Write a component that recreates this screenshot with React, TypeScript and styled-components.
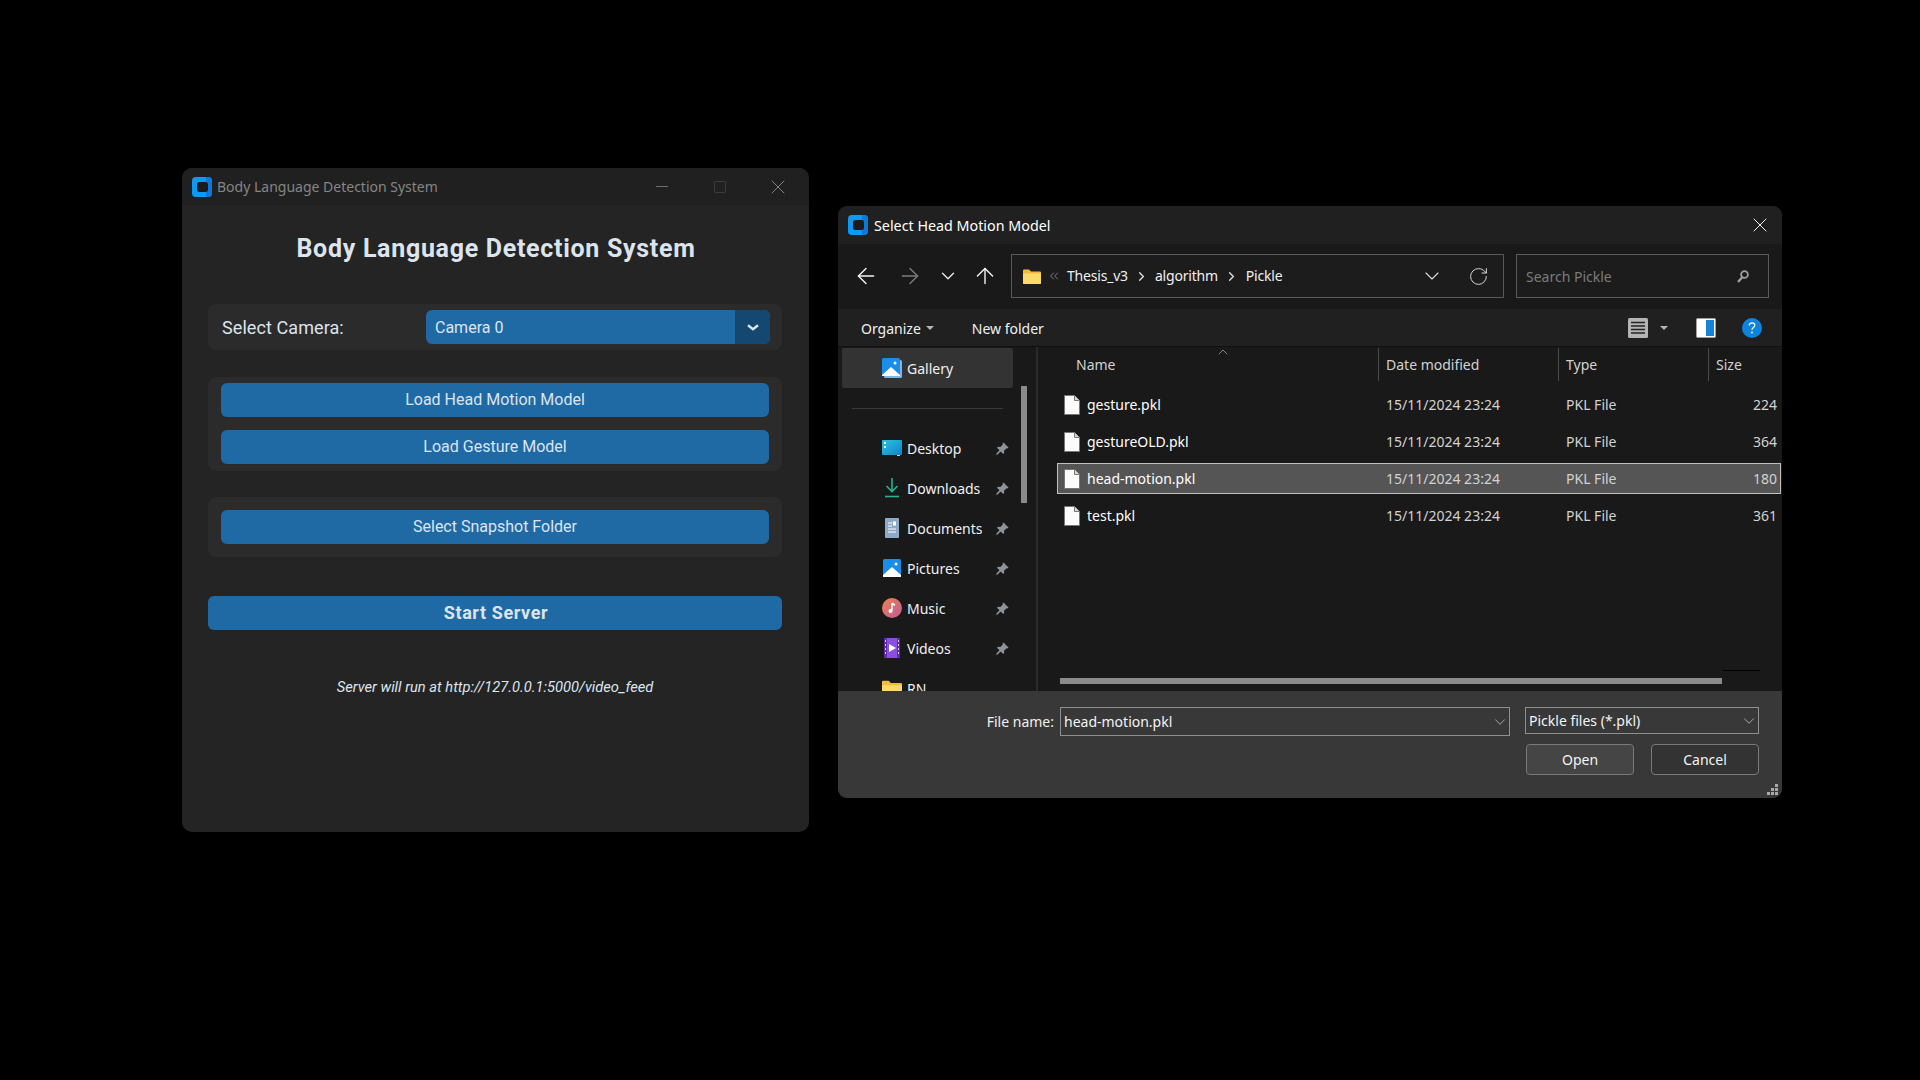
import React from 'react';
import styled, { createGlobalStyle } from 'styled-components';
import { ArrowLeft, ArrowRight, ArrowUp, ChevronDown, ChevronRight, ChevronUp, ChevronsLeft, RotateCw, X } from 'lucide-react';

const GlobalStyle = createGlobalStyle`
  html, body {
    margin: 0;
    height: 100%;
    background: #000;
  }
  #root {
    height: 100%;
  }
  * {
    box-sizing: border-box;
  }
`;

const Desktop = styled.div`
  position: relative;
  width: 1920px;
  height: 1080px;
  background: #000;
  overflow: hidden;
`;

/* ---------- CustomTkinter window ---------- */

const AppWindow = styled.section`
  position: absolute;
  left: 182px;
  top: 168px;
  width: 627px;
  height: 664px;
  display: flex;
  flex-direction: column;
  background: #242424;
  border-radius: 10px;
  overflow: hidden;
  font-family: Roboto, "Liberation Sans", sans-serif;
`;

const AppTitleBar = styled.header`
  flex: 0 0 37px;
  display: flex;
  align-items: center;
  padding: 0 2px 0 10px;
  background: #202020;
  color: #858585;
  font: 14px "Noto Sans", sans-serif;
`;

const AppTitleText = styled.span`
  margin-left: 5px;
  flex: 1;
`;

const WinControl = styled.div`
  width: 58px;
  height: 37px;
  display: flex;
  align-items: center;
  justify-content: center;
`;

const AppBody = styled.div`
  flex: 1;
  display: flex;
  flex-direction: column;
  padding: 29px 27px 0 26px;
`;

const Heading = styled.h1`
  margin: 0 0 40px;
  height: 30px;
  padding-left: 2px;
  line-height: 30px;
  text-align: center;
  font-size: 25px;
  font-weight: 700;
  letter-spacing: 0.7px;
  color: #dce4ee;
`;

const Panel = styled.div<{ $pad: string; $gap?: number; $after: number }>`
  display: flex;
  flex-direction: column;
  gap: ${p => p.$gap ?? 0}px;
  padding: ${p => p.$pad};
  margin-bottom: ${p => p.$after}px;
  background: #2b2b2b;
  border-radius: 8px;
`;

const CameraRow = styled.div`
  display: flex;
  align-items: center;
  justify-content: space-between;
`;

const FieldLabel = styled.label`
  font-size: 18px;
  letter-spacing: 0.08px;
  color: #dce4ee;
`;

const CameraSelect = styled.div`
  width: 344px;
  height: 34px;
  display: flex;
  border-radius: 6px;
  overflow: hidden;
  background: #1f6aa5;
  color: #dce4ee;
  font-size: 16px;
`;

const CameraValue = styled.span`
  flex: 1;
  line-height: 35px;
  padding-left: 9px;
`;

const CameraArrow = styled.span`
  width: 35px;
  display: flex;
  align-items: center;
  justify-content: center;
  background: #144870;
`;

const ActionButton = styled.button<{ $strong?: boolean }>`
  display: block;
  width: 100%;
  height: 34px;
  padding: ${p => (p.$strong ? '0 0 2px 2px' : '0 0 2px')};
  border: 0;
  border-radius: 6px;
  background: #1f6aa5;
  color: #dce4ee;
  font-family: inherit;
  font-size: ${p => (p.$strong ? 18 : 16)}px;
  font-weight: ${p => (p.$strong ? 700 : 400)};
  letter-spacing: ${p => (p.$strong ? 0.6 : 0)}px;
`;

const ServerNote = styled.p`
  margin: 47px 0 0;
  line-height: 20px;
  text-align: center;
  font-size: 14.7px;
  font-style: italic;
  color: #dce4ee;
`;

/* ---------- Windows file dialog ---------- */

const Dialog = styled.section`
  position: absolute;
  left: 838px;
  top: 206px;
  width: 944px;
  height: 592px;
  display: grid;
  grid-template-rows: 38px 65px 38px 344px 107px;
  background: #191919;
  border-radius: 9px;
  overflow: hidden;
  color: #fff;
  font: 14px "Noto Sans", sans-serif;
`;

const DialogTitleBar = styled.header`
  display: flex;
  align-items: center;
  padding: 0 10px 0 10px;
  background: #202020;
  font-size: 14.3px;
`;

const DialogTitle = styled.span`
  flex: 1;
  margin-left: 6px;
`;

const AddressRow = styled.div`
  display: flex;
  align-items: center;
  padding: 0 0 1px 6px;
  background: #191919;
`;

const NavButton = styled.div<{ $w: number }>`
  width: ${p => p.$w}px;
  display: flex;
  justify-content: center;
`;

const AddressBox = styled.div`
  width: 493px;
  height: 44px;
  margin-left: 5px;
  display: flex;
  align-items: center;
  padding-left: 11px;
  border: 1px solid #5a5a5a;
  background: #1c1c1c;
`;

const Crumb = styled.span`
  padding-bottom: 2px;
  letter-spacing: -0.2px;
  color: #f0f0f0;
`;

const CrumbGap = styled.span<{ $w: number }>`
  width: ${p => p.$w}px;
  display: flex;
  justify-content: center;
`;

const AddressEnd = styled.div`
  margin-left: auto;
  display: flex;
  align-items: center;
  gap: 24px;
  padding-right: 14px;
`;

const SearchBox = styled.div`
  width: 253px;
  height: 44px;
  margin-left: 12px;
  display: flex;
  align-items: center;
  justify-content: space-between;
  padding: 0 19px 0 9px;
  border: 1px solid #5a5a5a;
  background: #1c1c1c;
  color: #7b7b7b;
`;

const Toolbar = styled.div`
  display: flex;
  align-items: center;
  padding: 1px 20px 0 23px;
  background: #202020;
  border-bottom: 1px solid #111;
  color: #f0f0f0;
`;

const ToolCaret = styled.span<{ $left: number; $tone?: string }>`
  margin-left: ${p => p.$left}px;
  width: 0;
  height: 0;
  border-left: 4px solid transparent;
  border-right: 4px solid transparent;
  border-top: 4px solid ${p => p.$tone ?? '#b5b5b5'};
`;

const ToolLabel = styled.span<{ $left: number }>`
  margin-left: ${p => p.$left}px;
`;

const ToolIcon = styled.span<{ $left: number }>`
  margin-left: ${p => p.$left}px;
  display: flex;
`;

const ToolSpacer = styled.span`
  flex: 1;
`;

const Main = styled.div`
  display: grid;
  grid-template-columns: 198px 2px 1fr;
  min-height: 0;
  overflow: hidden;
  background: #191919;
`;

const Sidebar = styled.nav`
  position: relative;
  overflow: hidden;
  padding: 1px 0 0 4px;
`;

const SideThumb = styled.div`
  position: absolute;
  left: 183px;
  top: 39px;
  width: 6px;
  height: 117px;
  background: #8b8b8b;
`;

const GalleryItem = styled.div`
  width: 171px;
  height: 40px;
  display: flex;
  align-items: center;
  padding-left: 40px;
  gap: 5px;
  background: #333;
  border-radius: 2px;
  color: #f0f0f0;
`;

const SideRule = styled.div`
  width: 151px;
  height: 1px;
  margin: 20px 0 19px 10px;
  background: #3a3a3a;
`;

const SideItem = styled.div`
  width: 171px;
  height: 40px;
  display: flex;
  align-items: center;
  padding: 0 4px 0 40px;
  gap: 5px;
  color: #f0f0f0;
`;

const SideIconSlot = styled.span`
  width: 20px;
  display: flex;
  justify-content: center;
`;

const SideLabel = styled.span`
  flex: 1;
`;

const PaneRule = styled.div`
  background: #2b2b2b;
`;

const FileArea = styled.div`
  position: relative;
  display: flex;
  flex-direction: column;
  min-width: 0;
`;

const fileColumns = '321px 180px 150px 1fr';

const HeaderRow = styled.div`
  position: relative;
  display: grid;
  grid-template-columns: ${fileColumns};
  height: 33px;
  margin: 1px 0 8px 19px;
  color: #d2d2d2;
`;

const HeaderCell = styled.div<{ $first?: boolean }>`
  display: flex;
  align-items: center;
  padding-left: ${p => (p.$first ? 19 : 7)}px;
  border-left: ${p => (p.$first ? 'none' : '1px solid #4a4a4a')};
`;

const SortMark = styled.span`
  position: absolute;
  left: 158px;
  top: -4px;
  display: flex;
  color: #9a9a9a;
`;

const FileRows = styled.div`
  display: flex;
  flex-direction: column;
  gap: 6px;
  margin: 0 1px 0 19px;
`;

const FileRow = styled.div<{ $selected?: boolean }>`
  display: grid;
  grid-template-columns: ${fileColumns};
  height: 31px;
  align-items: center;
  color: #d2d2d2;
  background: ${p => (p.$selected ? '#555' : 'transparent')};
  outline: ${p => (p.$selected ? '1px solid #c0c0c0' : 'none')};
  outline-offset: -1px;
`;

const NameCell = styled.div`
  display: flex;
  align-items: center;
  gap: 7px;
  padding-left: 7px;
  color: #fff;
`;

const DataCell = styled.div<{ $right?: boolean }>`
  padding: ${p => (p.$right ? '0 4px 0 0' : '0 0 0 8px')};
  text-align: ${p => (p.$right ? 'right' : 'left')};
`;

const HScroll = styled.div`
  position: absolute;
  left: 22px;
  bottom: 7px;
  width: 662px;
  height: 6px;
  background: #8b8b8b;
`;

const HScrollEnd = styled.div`
  position: absolute;
  left: 685px;
  bottom: 20px;
  width: 37px;
  height: 1px;
  background: #000;
`;

const DialogFooter = styled.div`
  position: relative;
  display: flex;
  flex-direction: column;
  gap: 8px;
  padding: 16px 23px 0 0;
  background: #383838;
  color: #f0f0f0;
`;

const FooterRow = styled.div`
  display: flex;
  align-items: flex-start;
  justify-content: flex-end;
`;

const FooterLabel = styled.label`
  line-height: 29px;
  margin-right: 6px;
`;

const ComboBox = styled.div<{ $w: number; $h: number; $left?: number }>`
  width: ${p => p.$w}px;
  height: ${p => p.$h}px;
  margin-left: ${p => p.$left ?? 0}px;
  display: flex;
  align-items: center;
  justify-content: space-between;
  padding: 0 0 0 3px;
  border: 1px solid #8f8f8f;
  color: #f4f4f4;
`;

const DialogButton = styled.button<{ $default?: boolean; $left?: number }>`
  width: 108px;
  height: 31px;
  margin-left: ${p => p.$left ?? 0}px;
  border: 1px solid #7a7a7a;
  border-radius: 4px;
  background: ${p => (p.$default ? '#454545' : '#333')};
  color: #f4f4f4;
  font: inherit;
`;

const Grip = styled.svg`
  position: absolute;
  right: 3px;
  bottom: 2px;
`;

/* ---------- drawn icons ---------- */

const AppLogo = () => (
  <svg width="20" height="20" viewBox="0 0 20 20">
    <rect width="20" height="20" rx="4" fill="#0a9bf9" />
    <path d="M14 0h2a4 4 0 0 1 4 4v12a4 4 0 0 1-4 4h-2z" fill="#0b7ad8" />
    <rect x="5" y="5" width="11" height="10" rx="2.5" fill="#1b1b1b" />
  </svg>
);

const FolderIcon = ({ w = 18, h = 15 }: { w?: number; h?: number }) => (
  <svg width={w} height={h} viewBox="0 0 18 15">
    <path d="M0 1.5A1 1 0 0 1 1 .5h5l2 2h9a1 1 0 0 1 1 1V14a1 1 0 0 1-1 1H1a1 1 0 0 1-1-1z" fill="#f0bb3e" />
    <path d="M0 4.500h18V14a1 1 0 0 1-1 1H1a1 1 0 0 1-1-1z" fill="#fbd96b" />
  </svg>
);

const GalleryIcon = () => (
  <svg width="20" height="20" viewBox="0 0 20 20">
    <rect x="2" y="2" width="18" height="18" rx="1.500" fill="#7ab6e6" />
    <rect x="0" y="0" width="18" height="18" rx="1.500" fill="#1a8ee6" />
    <path d="M0 17l9-8 9 8v1H0z" fill="#fff" />
    <circle cx="13" cy="5" r="1.500" fill="#fff" />
  </svg>
);

const PicturesIcon = () => (
  <svg width="18" height="18" viewBox="0 0 18 18">
    <rect width="18" height="18" rx="1.500" fill="#1a8ee6" />
    <path d="M0 16l9-8 9 8v2H0z" fill="#fff" />
    <circle cx="13" cy="5" r="1.500" fill="#fff" />
  </svg>
);

const DesktopIcon = () => (
  <svg width="20" height="16" viewBox="0 0 20 16">
    <defs>
      <linearGradient id="desk" x1="0" y1="0" x2="1" y2="1">
        <stop offset="0" stopColor="#2cc4e0" />
        <stop offset="1" stopColor="#0f84c9" />
      </linearGradient>
    </defs>
    <rect width="20" height="15" rx="1" fill="url(#desk)" />
    <rect x="2" y="2" width="2" height="2" fill="#fff" />
    <rect x="2" y="6" width="2" height="2" fill="#fff" />
    <rect x="15" y="15" width="3" height="1" fill="#9adcec" />
  </svg>
);

const DownloadsIcon = () => (
  <svg width="20" height="20" viewBox="0 0 20 20" fill="none" stroke="#1fb58f" strokeWidth="1.600">
    <path d="M10 0v13M4.500 8l5.500 5.500L15.500 8" />
    <path d="M3 18.500h14" />
  </svg>
);

const DocumentsIcon = () => (
  <svg width="14" height="20" viewBox="0 0 14 20">
    <rect x="0" y="0" width="14" height="20" rx="1" fill="#8ea9c6" />
    <path d="M3 5h4M3 8h4M3 11h8M3 14h8" stroke="#fff" strokeWidth="1" />
    <rect x="8" y="3.500" width="3" height="4" fill="#fff" />
  </svg>
);

const MusicIcon = () => (
  <svg width="20" height="20" viewBox="0 0 20 20">
    <defs>
      <linearGradient id="mus" x1="0" y1="0" x2="1" y2="1">
        <stop offset="0" stopColor="#ef8150" />
        <stop offset="1" stopColor="#c05c96" />
      </linearGradient>
    </defs>
    <circle cx="10" cy="10" r="10" fill="url(#mus)" />
    <path d="M10 5v7.500" stroke="#fff" strokeWidth="1.400" />
    <circle cx="8.500" cy="13" r="2" fill="#fff" />
    <path d="M10 4.500l3 1.500v2l-3-1.200z" fill="#fff" />
  </svg>
);

const VideosIcon = () => (
  <svg width="16" height="20" viewBox="0 0 16 20">
    <rect x="0" y="0" width="16" height="20" rx="1" fill="#8b4fe0" />
    <path d="M0 0h3v20H0zM13 0h3v20h-3z" fill="#5d2fae" />
    <path d="M1 2h1v2H1zM1 6h1v2H1zM1 10h1v2H1zM1 14h1v2H1zM14 2h1v2h-1zM14 6h1v2h-1zM14 10h1v2h-1zM14 14h1v2h-1z" fill="#d6bdf8" />
    <path d="M5 6l7 4-7 4z" fill="#fff" />
  </svg>
);

const PinIcon = () => (
  <svg width="13" height="13" viewBox="0 0 13 13" fill="#8d939a">
    <path d="M7.500.5l5 5-1 1-1-.3-2.500 2.500.2 2.300-1 1-2.500-2.500L1 13 0 12l3.500-3.700L1 5.800l1-1 2.300.2L6.800 2.500 6.500 1.500z" />
  </svg>
);

const FileIcon = () => (
  <svg width="16" height="20" viewBox="0 0 16 20">
    <path d="M.5.5h10l5 5v14H.5z" fill="#fbfbfb" stroke="#777" />
    <path d="M10.500.5v5h5" fill="#d8d8d8" stroke="#777" />
  </svg>
);

const MagnifierIcon = () => (
  <svg width="12" height="13" viewBox="0 0 12 13" fill="none" stroke="#a0a0a0" strokeWidth="1.800">
    <circle cx="7.500" cy="4.500" r="3.400" />
    <path d="M5 7.500L1 12" strokeWidth="2.400" />
  </svg>
);

const DetailsIcon = () => (
  <svg width="20" height="20" viewBox="0 0 20 20">
    <rect width="20" height="20" rx="1.500" fill="#b4b4b4" />
    <path d="M3 4.500h14M3 8h14M3 11.500h14M3 15h14" stroke="#222" strokeWidth="1.300" />
  </svg>
);

const PaneIcon = () => (
  <svg width="20" height="20" viewBox="0 0 20 20">
    <rect x=".5" y=".5" width="19" height="19" rx="1" fill="#fff" stroke="#a0a0a0" />
    <rect x="2" y="2" width="8" height="16" fill="#fff" />
    <rect x="10" y="2" width="8" height="16" fill="#1583d8" />
  </svg>
);

const HelpIcon = () => (
  <svg width="20" height="20" viewBox="0 0 20 20">
    <circle cx="10" cy="10" r="10" fill="#0f84df" />
    <path d="M7.300 7.500c0-1.700 1.200-2.700 2.800-2.700s2.700 1 2.700 2.400c0 2.300-2.800 2.300-2.800 4.500" fill="none" stroke="#fff" strokeWidth="1.200" />
    <circle cx="10" cy="14.500" r=".9" fill="#fff" />
  </svg>
);

const CameraChevron = () => (
  <svg width="12" height="7" viewBox="0 0 12 7" fill="none" stroke="#dce4ee" strokeWidth="2.400">
    <path d="M1 1.200l5 4 5-4" />
  </svg>
);

const sideItems: { label: string; icon: React.ReactNode; pinned?: boolean }[] = [
  { label: 'Desktop', icon: <DesktopIcon />, pinned: true },
  { label: 'Downloads', icon: <DownloadsIcon />, pinned: true },
  { label: 'Documents', icon: <DocumentsIcon />, pinned: true },
  { label: 'Pictures', icon: <PicturesIcon />, pinned: true },
  { label: 'Music', icon: <MusicIcon />, pinned: true },
  { label: 'Videos', icon: <VideosIcon />, pinned: true },
  { label: 'RN', icon: <FolderIcon w={20} h={17} /> },
];

const files = [
  { name: 'gesture.pkl', size: '224' },
  { name: 'gestureOLD.pkl', size: '364' },
  { name: 'head-motion.pkl', size: '180', selected: true },
  { name: 'test.pkl', size: '361' },
];

const App: React.FC = () => (
  <Desktop>
    <GlobalStyle />

    <AppWindow>
      <AppTitleBar>
        <AppLogo />
        <AppTitleText>Body Language Detection System</AppTitleText>
        <WinControl>
          <svg width="12" height="12" viewBox="0 0 12 12"><path d="M0 5.500h12" stroke="#6e6e6e" /></svg>
        </WinControl>
        <WinControl>
          <svg width="12" height="12" viewBox="0 0 12 12"><rect x=".5" y=".5" width="11" height="11" rx="1" fill="none" stroke="#3c3c3c" /></svg>
        </WinControl>
        <WinControl>
          <X size={24} strokeWidth={0.9} color="#8c8c8c" />
        </WinControl>
      </AppTitleBar>
      <AppBody>
        <Heading>Body Language Detection System</Heading>
        <Panel $pad="6px 12px 6px 14px" $after={27}>
          <CameraRow>
            <FieldLabel>Select Camera:</FieldLabel>
            <CameraSelect>
              <CameraValue>Camera 0</CameraValue>
              <CameraArrow>
                <CameraChevron />
              </CameraArrow>
            </CameraSelect>
          </CameraRow>
        </Panel>
        <Panel $pad="6px 13px 7px" $gap={13} $after={26}>
          <ActionButton>Load Head Motion Model</ActionButton>
          <ActionButton>Load Gesture Model</ActionButton>
        </Panel>
        <Panel $pad="13px" $after={39}>
          <ActionButton>Select Snapshot Folder</ActionButton>
        </Panel>
        <ActionButton $strong>Start Server</ActionButton>
        <ServerNote>Server will run at http://127.0.0.1:5000/video_feed</ServerNote>
      </AppBody>
    </AppWindow>

    <Dialog>
      <DialogTitleBar>
        <AppLogo />
        <DialogTitle>Select Head Motion Model</DialogTitle>
        <X size={24} strokeWidth={1} color="#f0f0f0" />
      </DialogTitleBar>

      <AddressRow>
        <NavButton $w={44}><ArrowLeft size={26} strokeWidth={1.300} color="#f2f2f2" /></NavButton>
        <NavButton $w={44}><ArrowRight size={26} strokeWidth={1.300} color="#7c7c7c" /></NavButton>
        <NavButton $w={32}><ChevronDown size={22} strokeWidth={1.500} color="#e8e8e8" /></NavButton>
        <NavButton $w={42}><ArrowUp size={26} strokeWidth={1.300} color="#f2f2f2" /></NavButton>
        <AddressBox>
          <FolderIcon />
          <CrumbGap $w={26}><ChevronsLeft size={14} strokeWidth={1.500} color="#8a8a8a" /></CrumbGap>
          <Crumb>Thesis_v3</Crumb>
          <CrumbGap $w={27}><ChevronRight size={15} strokeWidth={2.400} color="#d8d8d8" /></CrumbGap>
          <Crumb>algorithm</Crumb>
          <CrumbGap $w={28}><ChevronRight size={15} strokeWidth={2.400} color="#d8d8d8" /></CrumbGap>
          <Crumb>Pickle</Crumb>
          <AddressEnd>
            <ChevronDown size={24} strokeWidth={1.100} color="#dcdcdc" />
            <RotateCw size={21} strokeWidth={1.100} color="#dcdcdc" />
          </AddressEnd>
        </AddressBox>
        <SearchBox>
          Search Pickle
          <MagnifierIcon />
        </SearchBox>
      </AddressRow>

      <Toolbar>
        <span>Organize</span>
        <ToolCaret $left={5} />
        <ToolLabel $left={38}>New folder</ToolLabel>
        <ToolSpacer />
        <ToolIcon $left={0}><DetailsIcon /></ToolIcon>
        <ToolCaret $left={12} />
        <ToolIcon $left={28}><PaneIcon /></ToolIcon>
        <ToolIcon $left={26}><HelpIcon /></ToolIcon>
      </Toolbar>

      <Main>
        <Sidebar>
          <GalleryItem>
            <GalleryIcon />
            <SideLabel>Gallery</SideLabel>
          </GalleryItem>
          <SideRule />
          {sideItems.map(item => (
            <SideItem key={item.label}>
              <SideIconSlot>{item.icon}</SideIconSlot>
              <SideLabel>{item.label}</SideLabel>
              {item.pinned && <PinIcon />}
            </SideItem>
          ))}
          <SideThumb />
        </Sidebar>
        <PaneRule />
        <FileArea>
          <HeaderRow>
            <HeaderCell $first>Name</HeaderCell>
            <HeaderCell>Date modified</HeaderCell>
            <HeaderCell>Type</HeaderCell>
            <HeaderCell>Size</HeaderCell>
            <SortMark><ChevronUp size={16} strokeWidth={1.200} /></SortMark>
          </HeaderRow>
          <FileRows>
            {files.map(file => (
              <FileRow key={file.name} $selected={file.selected}>
                <NameCell>
                  <FileIcon />
                  {file.name}
                </NameCell>
                <DataCell>15/11/2024 23:24</DataCell>
                <DataCell>PKL File</DataCell>
                <DataCell $right>{file.size}</DataCell>
              </FileRow>
            ))}
          </FileRows>
          <HScrollEnd />
          <HScroll />
        </FileArea>
      </Main>

      <DialogFooter>
        <FooterRow>
          <FooterLabel>File name:</FooterLabel>
          <ComboBox $w={450} $h={29}>
            head-motion.pkl
            <ChevronDown size={18} strokeWidth={1} color="#c8c8c8" />
          </ComboBox>
          <ComboBox $w={234} $h={27} $left={15}>
            Pickle files (*.pkl)
            <ChevronDown size={18} strokeWidth={1} color="#c8c8c8" />
          </ComboBox>
        </FooterRow>
        <FooterRow>
          <DialogButton $default>Open</DialogButton>
          <DialogButton $left={17}>Cancel</DialogButton>
        </FooterRow>
        <Grip width="12" height="12" viewBox="0 0 12 12" fill="#a8a8a8">
          <path d="M8 0h3v3H8zM4 4h3v3H4zM8 4h3v3H8zM0 8h3v3H0zM4 8h3v3H4zM8 8h3v3H8z" />
        </Grip>
      </DialogFooter>
    </Dialog>
  </Desktop>
);

export default App;
